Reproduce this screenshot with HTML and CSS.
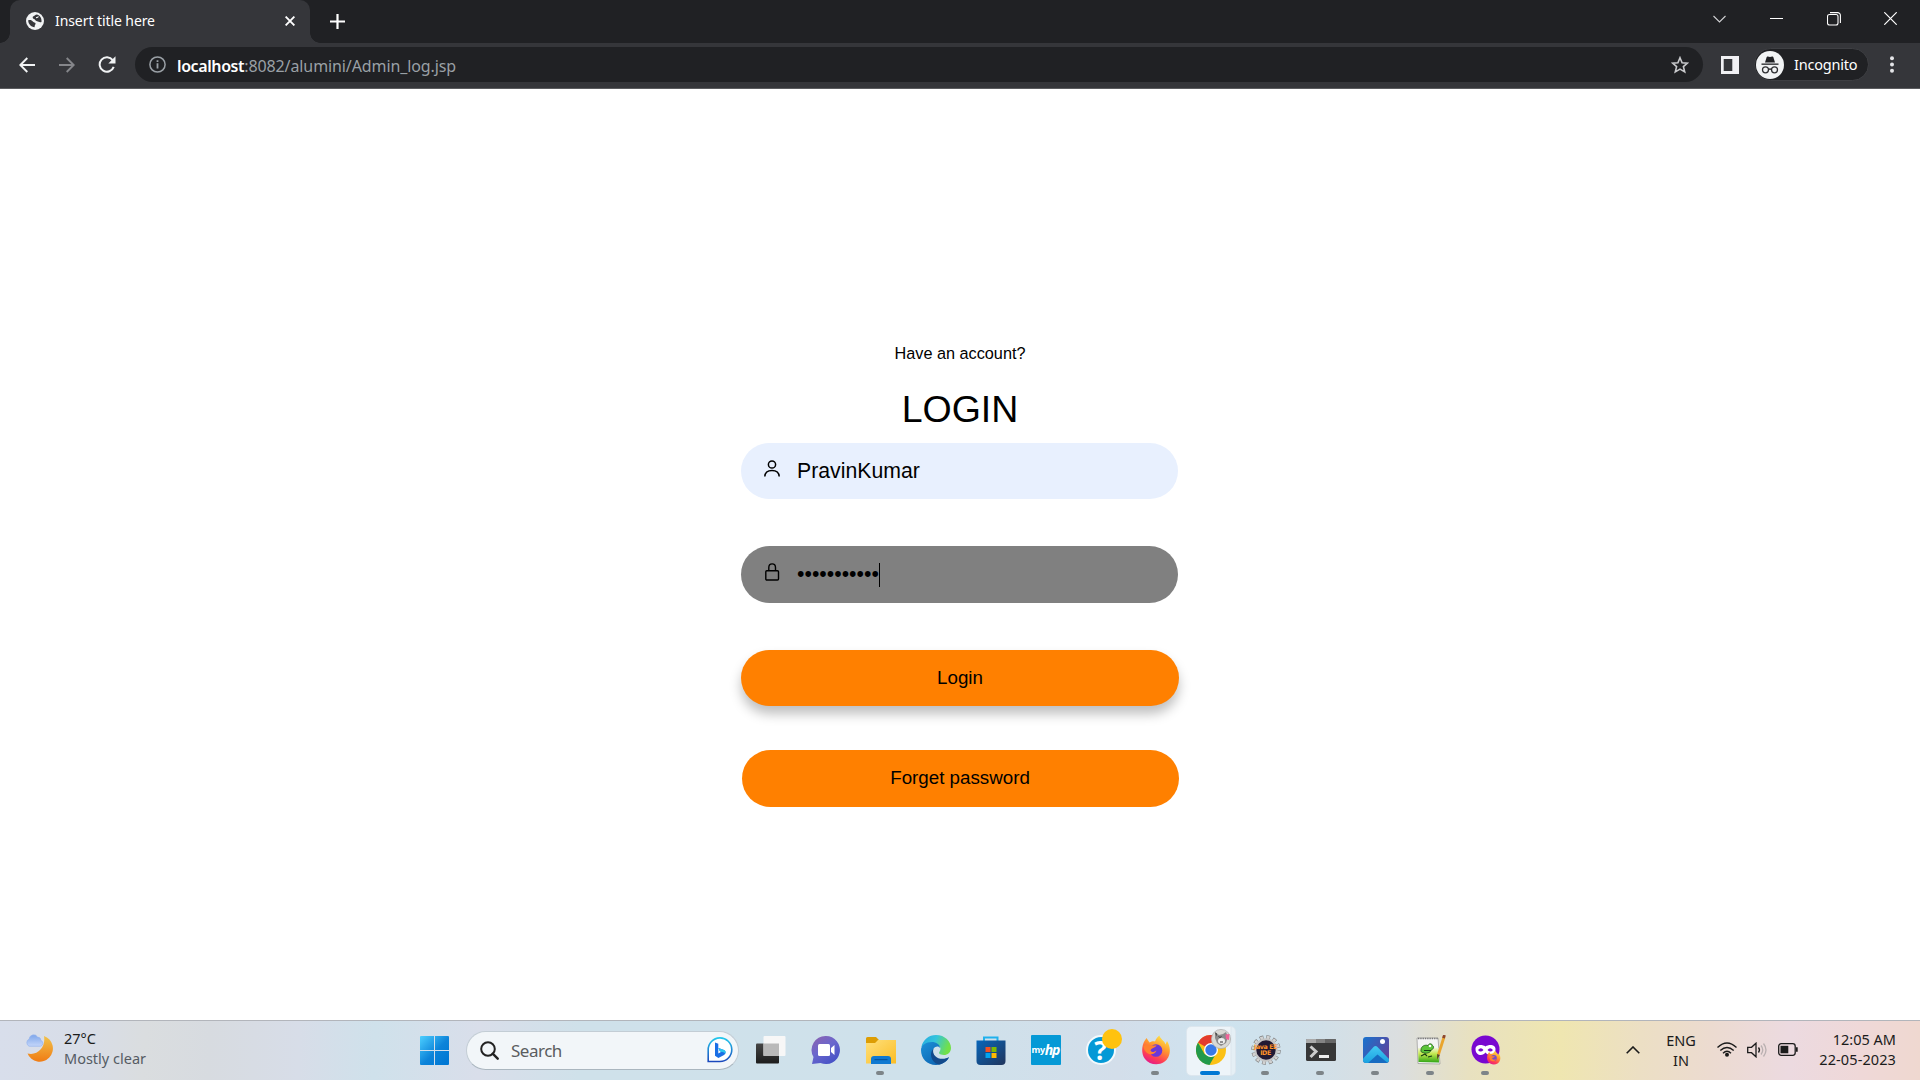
FILE: index.html
```html
<!DOCTYPE html>
<html lang="en">
<head>
<meta charset="utf-8">
<title>Insert title here</title>
<link rel="stylesheet" href="styles.css">
</head>
<body>
<header class="tabstrip">
  <div class="tab">
    <svg class="globe" width="18" height="18" viewBox="0 0 18 18"><circle cx="9" cy="9" r="9" fill="#f1f3f4"/><path d="M2.200 8.200c2.300-.6 4 .2 4.600 1.300.5 1 2.600.7 2.800 2 .1 1-1 1.200-1 3.700-3.600-.2-6.300-3.200-6.400-7zM11 2.500c-2 0-2 1.300-3.500 1.800-1.300.5-1 2.400.5 2.700 1.600.3 1.200 2 3 2.200 1.600.2 2.300 1.500 4.500.8C16 6.500 14 3.200 11 2.500z" fill="#35363a"/><path d="M10 5.500q1.500.3 2.500-1" stroke="#f1f3f4" stroke-width="1.200" fill="none"/></svg>
    <span class="tab-title">Insert title here</span>
    <svg width="10" height="10" viewBox="0 0 10 10"><path d="M.6.6l8.800 8.800M9.400.6.6 9.400" stroke="#fff" stroke-width="1.900"/></svg>
  </div>
  <svg class="newtab" width="15" height="15" viewBox="0 0 15 15"><path d="M7.500 0v15M0 7.500h15" stroke="#fff" stroke-width="2.200"/></svg>
  <div class="controls">
    <span><svg width="13" height="8" viewBox="0 0 13 8"><path d="M.5 1l6 6 6-6" fill="none" stroke="#d0d1d3" stroke-width="1.100"/></svg></span>
    <span><svg width="13" height="13" viewBox="0 0 13 13"><path d="M0 6.500h13" stroke="#fff"/></svg></span>
    <span><svg width="14" height="14" viewBox="0 0 14 14"><rect x=".5" y="2.500" width="10.500" height="10.500" rx="2" fill="none" stroke="#fff" stroke-width="1.100"/><path d="M3 .6h7.500a2.800 2.800 0 0 1 2.900 2.800V11" fill="none" stroke="#fff" stroke-width="1.100"/></svg></span>
    <span><svg width="13" height="13" viewBox="0 0 13 13"><path d="M.3.3l12.400 12.400M12.700.3.3 12.700" stroke="#fff" stroke-width="1.200"/></svg></span>
  </div>
</header>
<nav class="toolbar">
  <span class="slot"><svg width="16" height="16" viewBox="0 0 16 16"><path d="M16 8H1.500M8.300 1 1.300 8l7 7" fill="none" stroke="#f1f3f4" stroke-width="1.900"/></svg></span>
  <span class="slot"><svg width="16" height="16" viewBox="0 0 16 16"><path d="M0 8h14.500M7.700 1l7 7-7 7" fill="none" stroke="#85868a" stroke-width="1.900"/></svg></span>
  <span class="slot"><svg width="18" height="17" viewBox="0 0 18 17"><path d="M14.700 4.200A7.200 7.200 0 1 0 15.700 10.800" fill="none" stroke="#f1f3f4" stroke-width="2"/><path d="M17.500.3v7.200h-7.200z" fill="#f1f3f4"/></svg></span>
  <div class="address">
    <svg width="17" height="17" viewBox="0 0 17 17"><circle cx="8.500" cy="8.500" r="7.600" fill="none" stroke="#9aa0a6" stroke-width="1.500"/><path d="M8.500 7.300v5.200M8.500 4.200v1.900" stroke="#9aa0a6" stroke-width="1.800"/></svg>
    <span class="url"><b>localhost</b>:8082/alumini/Admin_log.jsp</span>
    <svg width="18" height="18" viewBox="0 0 18 18"><path d="M9 1.700l2.100 5 5.400.4-4.100 3.500 1.300 5.300L9 13.100l-4.700 2.800 1.300-5.300L1.500 7.100l5.400-.4z" fill="none" stroke="#c8c9cc" stroke-width="1.600"/></svg>
  </div>
  <svg class="panel" width="18" height="18" viewBox="0 0 18 18"><path fill-rule="evenodd" d="M0 0h18v18H0zM2.700 3v12h8.600V3z" fill="#f1f1f4"/></svg>
  <div class="incognito">
    <svg width="28" height="28" viewBox="0 0 28 28"><circle cx="14" cy="14" r="14" fill="#f1f3f4"/><g fill="#202124"><path d="M9 11.500l1.700-5.600q.3-.7 1.100-.4l2.200.6 2.200-.6q.8-.3 1.100.4l1.700 5.600z"/><path d="M5.500 12.500h17v1.300h-17z"/></g><g fill="none" stroke="#303134" stroke-width="1.300"><circle cx="9.500" cy="18.800" r="3"/><circle cx="18.500" cy="18.800" r="3"/><path d="M12.500 18.500q1.500-1 3 0"/></g></svg>
    <span>Incognito</span>
  </div>
  <svg class="dots" width="4" height="17" viewBox="0 0 4 17" fill="#e4e5e8"><circle cx="2" cy="2.200" r="2"/><circle cx="2" cy="8.500" r="2"/><circle cx="2" cy="14.800" r="2"/></svg>
</nav>
<main class="page">
  <p class="hint">Have an account?</p>
  <h1 class="heading">LOGIN</h1>
  <div class="field user">
    <svg width="16" height="17" viewBox="0 0 16 17"><g fill="none" stroke="#000" stroke-width="1.500"><circle cx="8" cy="4.500" r="3.600"/><path d="M.8 16.500C1 12.300 4 10.400 8 10.400s7 1.900 7.200 6.100"/></g></svg>
    <span>PravinKumar</span>
  </div>
  <div class="field pass">
    <svg width="16" height="18" viewBox="0 0 16 18"><g fill="none" stroke="#000" stroke-width="1.400"><rect x="1.800" y="7.700" width="12.700" height="9.300" rx="1"/><path d="M4.800 7.500V4.600c0-5 6.700-5 6.700 0v2.900"/></g></svg>
    <span>•••••••••••</span><i class="caret"></i>
  </div>
  <button class="button primary">Login</button>
  <button class="button forget">Forget password</button>
</main>
<footer class="taskbar">
  <div class="weather">
    <svg width="28" height="28" viewBox="0 0 28 28"><defs><linearGradient id="moon" x1="0" y1="0" x2="0" y2="1"><stop offset="0" stop-color="#f1c24a"/><stop offset="1" stop-color="#f07c14"/></linearGradient><linearGradient id="cloud" x1="0" y1="0" x2="0" y2="1"><stop offset="0" stop-color="#7ea6ea"/><stop offset="1" stop-color="#c4d6fa"/></linearGradient></defs><path d="M19 2a13.200 13.200 0 1 1-16.500 17.500C13 22 21 13 19 2z" fill="url(#moon)"/><path d="M4 12.200a4 4 0 0 1 .2-7.200A4.500 4.500 0 0 1 12.500 3a3.800 3.800 0 0 1 3.500 3.500 3 3 0 0 1-.5 5.700z" fill="url(#cloud)" stroke="#94b3ee" stroke-width=".7"/></svg>
    <p><span>27°C</span><span class="muted">Mostly clear</span></p>
  </div>
  <svg class="start" width="29" height="29" viewBox="0 0 29 29"><defs><linearGradient id="win" gradientUnits="userSpaceOnUse" x1="0" y1="0" x2="26" y2="26"><stop offset="0" stop-color="#4ccfff"/><stop offset=".6" stop-color="#0c83d9"/><stop offset="1" stop-color="#0078d4"/></linearGradient></defs><path d="M1 0h13v14H0V1a1 1 0 0 1 1-1zM15 0h13a1 1 0 0 1 1 1v13H15zM0 15h14v14H1a1 1 0 0 1-1-1zM15 15h14v13a1 1 0 0 1-1 1H15z" fill="url(#win)"/></svg>
  <div class="search">
    <svg width="19" height="19" viewBox="0 0 19 19"><circle cx="8" cy="8" r="6.800" fill="none" stroke="#222" stroke-width="2"/><path d="M12.700 12.700l5 5" stroke="#222" stroke-width="2.400" stroke-linecap="round"/></svg>
    <span>Search</span>
    <svg width="26" height="26" viewBox="0 0 26 26"><defs><linearGradient id="bing" x1="0" y1="0" x2="0" y2="1"><stop offset="0" stop-color="#23c8ec"/><stop offset="1" stop-color="#1b49bd"/></linearGradient></defs><path d="M1.200 24.500V13A11.800 11.800 0 1 1 13 24.500z" fill="#fff" stroke="url(#bing)" stroke-width="1.600"/><path d="M8 5.500l3.300 1.300v9.800l3-1.800-1.600-.8-1.200-2.900 5.500 1.900c2.200 1 2 3.800 0 5l-5.600 3L8 18.800z" fill="#1b6fe5"/><path d="M11.500 11.100l5.500 1.900c1.800.8 2 2.700 1.200 3.800-1-1.800-2.500-1.900-4-1.900l-1.500-.9z" fill="#2bc4ee"/></svg>
  </div>
  <div class="apps">
    <span class="app"><svg viewBox="0 0 30 30"><defs><linearGradient id="tv" x1="0" y1="0" x2="0" y2="1"><stop offset="0" stop-color="#454545"/><stop offset="1" stop-color="#1d1d1d"/></linearGradient></defs><rect x="0" y="8.500" width="23" height="20" rx="1" fill="url(#tv)"/><rect x="7.500" y="1" width="22" height="20" rx="1" fill="#f7f7f7"/><path d="M7.500 8.500H23V21H7.500z" fill="#b9b9b9"/></svg></span>
    <span class="app"><svg viewBox="0 0 30 30"><defs><linearGradient id="chat" x1="0" y1="0" x2=".7" y2="1"><stop offset="0" stop-color="#8f62ad"/><stop offset=".5" stop-color="#6b67cd"/><stop offset="1" stop-color="#4652c6"/></linearGradient></defs><path d="M15 1a14 14 0 1 1-5.500 26.900L1 29l1.500-7A14 14 0 0 1 15 1z" fill="url(#chat)"/><rect x="7" y="9" width="12" height="12" rx="1.500" fill="#fff"/><path d="M20 13l3.500-3v10L20 17z" fill="#fff"/></svg></span>
    <span class="app"><svg viewBox="0 0 30 30"><defs><linearGradient id="fold" x1="0" y1="0" x2="1" y2="1"><stop offset="0" stop-color="#ffe07c"/><stop offset="1" stop-color="#fbbd25"/></linearGradient></defs><path d="M0 3.500A1.500 1.500 0 0 1 1.500 2H10l3 3h17v5H0z" fill="#dd9d04"/><path d="M0 8h9l3-3h18v23.500H0z" fill="url(#fold)"/><path d="M5 29v-5a3 3 0 0 1 3-3h14a3 3 0 0 1 3 3v5z" fill="#1079d1"/><path d="M8.500 24.600h13" stroke="#07559f" stroke-width="1.200"/></svg><i></i></span>
    <span class="app"><svg viewBox="0 0 30 30"><defs><linearGradient id="edge" x1="0" y1="0" x2="1" y2=".3"><stop offset="0" stop-color="#25a9e0"/><stop offset=".5" stop-color="#34c4dd"/><stop offset="1" stop-color="#72e048"/></linearGradient><linearGradient id="edge2" x1="0" y1="0" x2="1" y2="1"><stop offset="0" stop-color="#1c91d8"/><stop offset="1" stop-color="#0959a9"/></linearGradient></defs><path d="M.4 12C2 4.500 8 0 15 0c9 0 15 6.500 15 13 0 4.500-3.500 7-7 7-5 0-5.500-2-4.500-3.200 3-4.300-1-7.800-6-7.800-6 0-10 3-12.100 3z" fill="url(#edge)"/><path d="M0 15c0-5 5-8 11-8 4 0 8 2.500 8 6-3-3.500-8 0-7 5 1 5 7 8 13 5.500l3-1.200C26 27 20.500 30 15 30 6 30 0 23.500 0 15z" fill="url(#edge2)"/><path d="M12.300 14c-5 5-1 14.500 6 15.500 4-.8 7.500-3.300 9.700-7.200-8.500 4.200-17.500-.5-15.700-8.300z" fill="#134a8b"/></svg></span>
    <span class="app"><svg viewBox="0 0 30 30"><defs><linearGradient id="store" x1="0" y1="0" x2="1" y2="1"><stop offset="0" stop-color="#0766ba"/><stop offset="1" stop-color="#21355c"/></linearGradient></defs><path d="M8 7V2.500h13.500V7" fill="none" stroke="#20b1ed" stroke-width="2"/><path d="M.5 5.500h29V26a4 4 0 0 1-4 4h-21a4 4 0 0 1-4-4z" fill="url(#store)"/><path d="M9.500 12h5v5h-5z" fill="#f25022"/><path d="M15.500 12h5v5h-5z" fill="#7fba00"/><path d="M9.500 18h5v5h-5z" fill="#00a4ef"/><path d="M15.500 18h5v5h-5z" fill="#ffb900"/></svg></span>
    <span class="app"><b class="hp"><span>my</span><em>hp</em></b></span>
    <span class="app"><b class="help">?</b><u></u></span>
    <span class="app"><svg viewBox="0 0 30 30"><defs><linearGradient id="fox" x1=".8" y1="0" x2=".3" y2="1"><stop offset="0" stop-color="#fff04a"/><stop offset=".4" stop-color="#ff9a2e"/><stop offset=".75" stop-color="#ff3f53"/><stop offset="1" stop-color="#e3198c"/></linearGradient></defs><path id="foxshape" d="M3.500 6l2-3 3 4.500C11 6 12.500 6 14 6.500 15 3 17.500 1 18.500.5c0 3 5 5 6 9l1.500-3.500c5 8 3 17-3 21-6 4-15 2.500-19-3C-.3 18.500 1 10 3.500 6z" fill="url(#fox)"/><circle cx="15" cy="15.500" r="6.300" fill="#6a38d8"/><path d="M2.500 11c5-3 9 1 13-1-.5 3-5 2.500-6 5.500 2 3 4 1 6 0-1 4-7 5-10 2-2-2-3-4-3-6.500z" fill="#ff8130"/></svg><i></i></span>
    <span class="app active"><svg viewBox="0 0 30 30"><circle cx="15" cy="15" r="15" fill="#fbc116"/><path d="M15 15 2 7.500A15 15 0 0 1 28 7.500H15z" fill="#e33b2e"/><path d="M2 7.500 8.500 19 15 22 19.500 19.500 13.500 30A15 15 0 0 1 2 7.500z" fill="#229a4b"/><circle cx="15" cy="15" r="7" fill="#fff"/><circle cx="15" cy="15" r="5.700" fill="#3979e8"/></svg><svg class="avatar" viewBox="0 0 20 20"><circle cx="10" cy="10" r="9.600" fill="#d9d9d5" stroke="#aaa" stroke-width=".7"/><path d="M4 3l4 3 4-1 3-2 2 5-2 6-5 3-4-3-2-5z" fill="#8b8b8b"/><path d="M14.500 5.500l4-.5-.5 6-3-1z" fill="#ef6297"/><path d="M4 3.500l2 1-.5 3z" fill="#444"/><ellipse cx="10.500" cy="12" rx="3.500" ry="3" fill="#eee"/><path d="M7.500 7.500l1.500 1 1.500-1M9 13h3" stroke="#333" fill="none"/></svg><i></i></span>
    <span class="app"><svg viewBox="0 0 30 30"><circle cx="15" cy="15" r="12.800" fill="none" stroke="#777" stroke-width="3.800" stroke-dasharray="3.750 2.950"/><circle cx="15" cy="15" r="12.600" fill="none" stroke="#d2d2d2" stroke-width="3.200" stroke-dasharray="2.850 3.750" stroke-dashoffset="-.4"/><circle cx="15" cy="15" r="10.700" fill="#221a33" stroke="#c5c5c5" stroke-width="2"/></svg><b class="jee">Java EE<br>IDE</b><i></i></span>
    <span class="app"><svg viewBox="0 0 30 30"><rect y="4" width="30" height="22" rx="1.500" fill="#373737"/><path d="M1 4h9v4H0V5a1 1 0 0 1 1-1z" fill="#aaa"/><path d="M10 4h9v4h-9z" fill="#848484"/><path d="M19 4h10a1 1 0 0 1 1 1v3H19z" fill="#666"/><path d="M4.500 11.500l5.500 5-5.500 5.500" fill="none" stroke="#ccc" stroke-width="3"/><path d="M13 21.500h10" stroke="#eee" stroke-width="3"/></svg><i></i></span>
    <span class="app"><svg viewBox="0 0 30 30"><defs><linearGradient id="ph" x1="0" y1="0" x2="1" y2=".6"><stop offset="0" stop-color="#1873ce"/><stop offset="1" stop-color="#5b459e"/></linearGradient><linearGradient id="mt" x1="0" y1="0" x2="0" y2="1"><stop offset="0" stop-color="#43c9f3"/><stop offset="1" stop-color="#169cdd"/></linearGradient><clipPath id="pc"><rect x="2" y="2" width="26" height="26" rx="3"/></clipPath></defs><g clip-path="url(#pc)"><path d="M2 2h26v26H2z" fill="url(#ph)"/><path d="M0 26 12.500 12q2-2 4 0L30 26v4H0z" fill="url(#mt)"/><path d="M6 29l10.500-9.500L28 29z" fill="#176bc1"/><circle cx="21.500" cy="6.500" r="2.500" fill="#fff"/></g></svg><i></i></span>
    <span class="app"><svg viewBox="0 0 30 30"><defs><linearGradient id="npp" x1="0" y1="0" x2="0" y2="1"><stop offset="0" stop-color="#f1f6d5"/><stop offset=".4" stop-color="#c3e74e"/><stop offset="1" stop-color="#2fa516"/></linearGradient></defs><path d="M1 3h21l2 26-22-.5z" fill="#f4f4f4" stroke="#888" stroke-width=".6"/><path d="M2 13h20.500L23 27.500 2.500 27z" fill="url(#npp)"/><path d="M2 3.500h20" stroke="#777" stroke-dasharray="1.300 1" stroke-width="1.700"/><path d="M5 15c0-4 4-5.500 7-4.500 1-2.500 4-2 4.500 0 2 1 1 4-1.500 4.500 0 3-6 4-8 2.500C5.500 17.500 4.500 16.500 5 15z" fill="#5cc53a" stroke="#205a19" stroke-width=".8"/><path d="M5 21l4-2 2 2M8 15.500h7M12 22l4-1" stroke="#173c16" fill="none" stroke-width="1.100"/><circle cx="14" cy="11" r="1.300" fill="#fff"/><path d="M28 2 22.500 19.500" stroke="#e9a52e" stroke-width="2.800" fill="none"/><path d="M21.100 19l2.700.9-2.600 4.600z" fill="#5b4023"/><path d="M28.500 0 27.500 3.200" stroke="#8e4930" stroke-width="2.800"/></svg><i></i></span>
    <span class="app"><svg viewBox="0 0 30 30"><circle cx="14.500" cy="14.500" r="14" fill="#7908d0"/><path fill-rule="evenodd" d="M4.500 14c0-4.500 6.500-5 10-2.500 3.500-2.500 10-2 10 2.500 0 7-7.500 7.500-10 3.500-2.500 4-10 3.500-10-3.500zM7 15q2.500 3 5.500 0-2.500-3.300-5.500 0zM16.500 15q3 3 5.500 0-3-3.300-5.500 0z" fill="#fff"/><use href="#foxshape" transform="translate(15.500 15.500) scale(.48)"/><circle cx="22.800" cy="23" r="3" fill="#754dcc"/><path d="M18 20q2 2 6 1-1 2-3 2 1 3 4 1-2 4-6 1z" fill="#ff812d"/></svg><i></i></span>
  </div>
  <div class="tray">
    <svg class="up" width="14" height="8" viewBox="0 0 14 8"><path d="M.7 7.300 7 1l6.300 6.300" fill="none" stroke="#1b1b1b" stroke-width="1.600"/></svg>
    <p class="lang"><span>ENG</span><span>IN</span></p>
    <svg width="20" height="15" viewBox="0 0 20 15"><g fill="none" stroke="#1b1b1b" stroke-width="1.400"><path d="M.5 5.500Q10-3.500 19.500 5.500M3.300 8.500q6.700-6.200 13.400 0M6 11.200q4-3.800 8 0"/></g><circle cx="10" cy="12.800" r="2" fill="#1b1b1b"/></svg>
    <svg class="sound" width="20" height="16" viewBox="0 0 20 16"><g fill="none" stroke="#1b1b1b" stroke-width="1.300"><path d="M.7 5.300h3.800L9 1.200v13.600l-4.500-4.100H.7z"/><path d="M11.500 5.500q2 2.500 0 5"/><path d="M14 3.500q3.500 4.500 0 9M16.500 1.500q5 6.500 0 13" stroke="#b9b0b1"/></g></svg>
    <svg class="battery" width="20" height="13" viewBox="0 0 20 13"><rect x=".7" y=".7" width="16.500" height="11.600" rx="2.500" fill="none" stroke="#1b1b1b" stroke-width="1.300"/><path d="M2.500 2.800h7.800v7.500H2.500z" fill="#1b1b1b"/><path d="M18 4.200h1.700v4.500H18z" fill="#1b1b1b"/></svg>
    <p class="clock"><span>12:05 AM</span><span class="date">22-05-2023</span></p>
  </div>
</footer>
</body>
</html>
```
FILE: styles.css
```css
* { box-sizing: border-box; }
body {
  margin: 0;
  width: 1920px;
  height: 1080px;
  overflow: hidden;
  display: flex;
  flex-direction: column;
  background: #fff;
  font-family: "Noto Sans", sans-serif;
}
svg { display: block; flex: none; }
p, h1 { margin: 0; font-weight: 400; }

.tabstrip { height: 43px; flex: none; display: flex; align-items: flex-start; background: #202124; }
.tab {
  position: relative;
  width: 300px;
  height: 43px;
  margin-left: 10px;
  padding: 0 15px 1px 16px;
  display: flex;
  align-items: center;
  background: #35363a;
  border-radius: 10px 10px 0 0;
}
.tab::before, .tab::after {
  content: "";
  position: absolute;
  bottom: 0;
  width: 10px;
  height: 10px;
}
.tab::before { left: -10px; background: radial-gradient(circle at 0 0, #202124 9.500px, #35363a 10px); }
.tab::after { right: -10px; background: radial-gradient(circle at 100% 0, #202124 9.500px, #35363a 10px); }
.tab-title { flex: 1; margin: 0 0 2px 11px; font-size: 14px; letter-spacing: -.08px; color: #fff; white-space: nowrap; }
.newtab { margin: 14px 0 0 20px; }
.controls { margin: 0 0 0 auto; display: flex; height: 37px; padding-right: 1px; }
.controls span { width: 57px; display: flex; align-items: center; justify-content: center; }

.toolbar {
  height: 46px;
  flex: none;
  display: flex;
  align-items: center;
  padding: 0 26px 2px 7px;
  background: #35363a;
  border-bottom: 1px solid #5b5c5f;
}
.slot { width: 40px; display: flex; justify-content: center; }
.address {
  width: 1568px;
  height: 35px;
  margin-left: 8px;
  padding: 0 14px 0 14px;
  display: flex;
  align-items: center;
  border-radius: 18px;
  background: #202124;
}
.url { flex: 1; margin: 2px 0 0 11px; font-size: 16px; color: #9aa0a6; letter-spacing: -.1px; white-space: nowrap; }
.url b { font-weight: 600; color: #fff; letter-spacing: -.4px; }
.panel { margin-left: 18px; }
.incognito {
  width: 115px;
  height: 33px;
  margin-left: 15px;
  padding-left: 1px;
  display: flex;
  align-items: center;
  border: 1px solid #3e3f43;
  border-radius: 17px;
  background: #202124;
  color: #fff;
  font-size: 14.500px;
  letter-spacing: -.2px;
}
.incognito span { margin: 0 0 2px 10px; }
.dots { margin-left: 21px; }

.page {
  flex: 1;
  display: flex;
  flex-direction: column;
  align-items: center;
  padding-top: 252px;
  color: #000;
  font-family: "Liberation Sans", Arial, sans-serif;
}
.hint { height: 24px; line-height: 24px; font-size: 16.250px; }
.heading { height: 44px; line-height: 44px; margin-top: 22px; font-size: 37.500px; }
.field {
  width: 437px;
  height: 56px;
  margin-right: 1px;
  padding-left: 23px;
  display: flex;
  align-items: center;
  border-radius: 29px;
  font-size: 21.250px;
}
.field svg { margin: 0 17px 6px 0; }
.user { margin-top: 12px; background: #e8f0fe; }
.pass { height: 57px; margin-top: 47px; background: #808080; }
.pass span { margin-bottom: 1px; }
.caret { width: 1px; height: 24px; background: #000; }
.button {
  width: 438px;
  height: 56px;
  margin-top: 47px;
  padding: 0;
  border: 0;
  border-radius: 29px;
  background: #ff8000;
  color: #000;
  font: 18.750px "Liberation Sans", Arial, sans-serif;
}
.primary { box-shadow: 0 8px 12px rgba(0, 0, 0, .25); }
.forget { width: 437px; height: 57px; margin: 44px 0 0 1px; padding: 0 1px 2px 0; }

.taskbar {
  height: 60px;
  flex: none;
  display: flex;
  align-items: center;
  padding-left: 25px;
  border-top: 1px solid #b2b5bb;
  background: linear-gradient(92deg, #d8deeb 0, #d8dde7 90px, #dadddf 145px, #d7dbe0 210px, #d7dde8 300px, #cfe1eb 375px, #d9deea 480px, #cfe1ea 580px, #cfe1eb 960px, #d3deea 1120px, #cee3ef 1220px, #d1e0e9 1320px, #dbdedf 1400px, #e8e1c0 1470px, #efe6b0 1560px, #ecdfc4 1640px, #ecdbd0 1710px, #ecdae0 1790px, #efd8d8 1860px, #efd8d0 1920px);
  color: #1b1b1b;
  font-size: 14.500px;
}
.taskbar p { display: flex; flex-direction: column; line-height: 20px; white-space: nowrap; }
.weather { width: 395px; display: flex; align-items: center; padding-bottom: 5px; }
.weather p { margin: 0 0 0 11px; }
.muted { color: #555b63; }
.search {
  width: 273px;
  height: 39px;
  margin: 0 0 1px 17px;
  padding: 0 5px 0 13px;
  display: flex;
  align-items: center;
  border: 1px solid #c3cdd5;
  border-bottom-color: #aab6bf;
  border-radius: 20px;
  background: #f2f6f9;
  font-size: 17px;
  color: #5a5d60;
}
.search span { flex: 1; margin-left: 12px; letter-spacing: -.5px; }
.apps { display: flex; margin-left: 4px; }
.app { position: relative; width: 55px; height: 48px; display: flex; align-items: center; justify-content: center; }
.app > svg { width: 30px; height: 30px; margin-bottom: 1px; }
.app > i { position: absolute; bottom: 0; left: 23px; width: 8px; height: 4px; border-radius: 2px; background: #7d8488; }
.active::before {
  content: "";
  position: absolute;
  left: 3px;
  width: 48px;
  height: 48px;
  border: 1px solid #dce6ee;
  border-radius: 5px;
  background: linear-gradient(90deg, #edf4f9 43px, #dce6ed 44px, #e5eff5 45px);
}
.active > svg { position: relative; }
.active > i { left: 17px; width: 20px; background: #0078d4; }
.app > .avatar { position: absolute; left: 28px; top: 2px; width: 20px; height: 20px; }
.hp { width: 30px; height: 30px; margin-bottom: 1px; display: flex; align-items: center; justify-content: center; border-radius: 1px; background: #0599d6; color: #fff; font: 700 9px/30px "Noto Sans", sans-serif; letter-spacing: -.4px; }
.hp em { font-size: 14px; letter-spacing: -1px; }
.help { width: 30px; height: 30px; margin-bottom: 1px; border: 2px solid #f3f9fc; border-radius: 50%; background: #0599d6; color: #fff; font: 700 26px/26px "Noto Sans", sans-serif; text-align: center; }
.app > u { position: absolute; left: 29px; top: 2px; width: 20px; height: 20px; border-radius: 50%; background: #ffc20e; }
.jee { position: absolute; inset: 17px 0 auto; text-align: center; font: 700 6.300px/6px "DejaVu Sans", sans-serif; letter-spacing: -.4px; color: #ff9328; }
.tray { flex: 1; display: flex; align-items: center; padding: 0 24px 2px 0; }
.up { margin-left: 113px; }
.lang { width: 56px; margin-left: 13px; align-items: center; }
.tray .lang + svg { margin-left: 8px; }
.sound { margin-left: 10px; }
.battery { margin-left: 11px; }
.clock { margin: 0 0 2px auto; align-items: flex-end; }
.date { letter-spacing: .1px; }
```
